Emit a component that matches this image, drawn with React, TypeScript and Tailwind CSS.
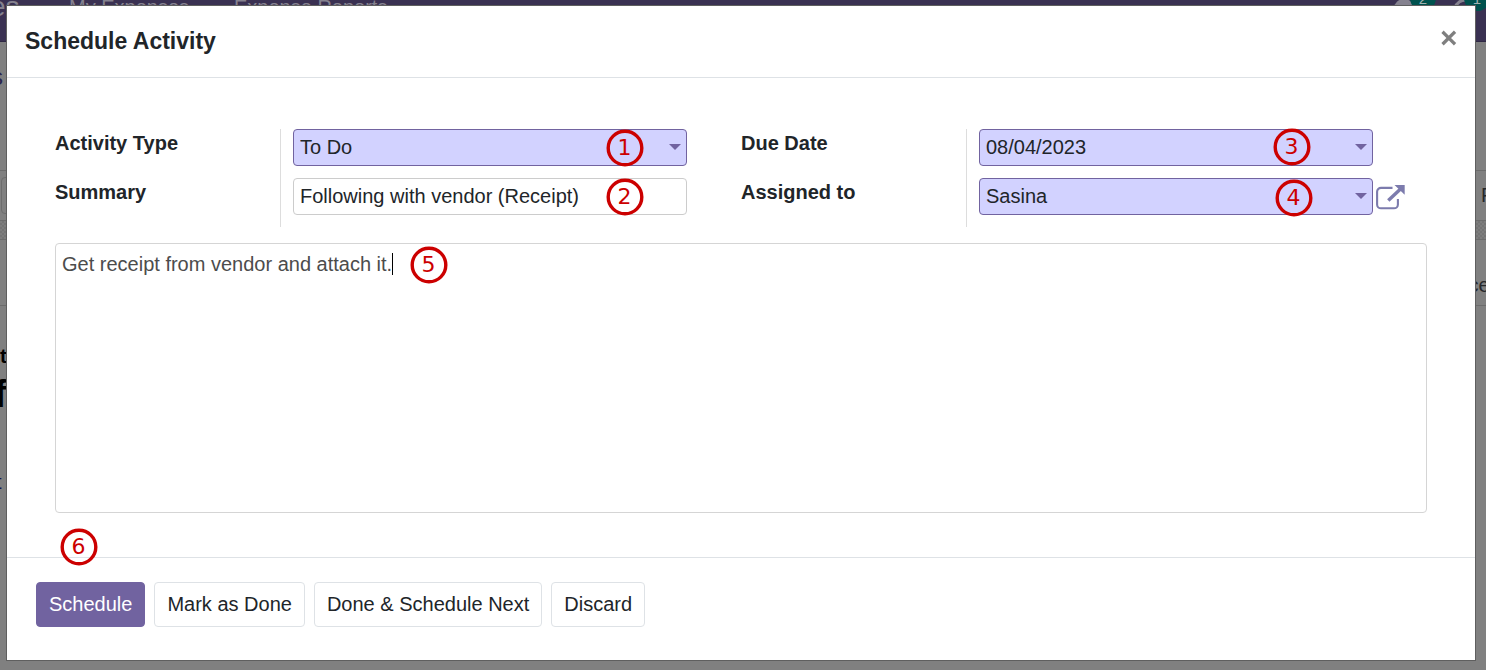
import { useState, type ReactNode } from "react";

function Marker({ n, className }: { n: number; className: string }) {
  return (
    <svg viewBox="0 0 38 38" className={`pointer-events-none absolute size-[38px] ${className}`} aria-hidden="true">
      <circle cx="19" cy="19" r="16.8" fill="none" stroke="#cc0000" strokeWidth="3.4" />
      <text x="18.6" y="26.4" textAnchor="middle" fontSize="22" fill="#cc0000" fontFamily="DejaVu Sans, sans-serif">
        {n}
      </text>
    </svg>
  );
}

function Caret() {
  return (
    <svg viewBox="0 0 12 6" className="pointer-events-none absolute top-[15px] right-[6px] h-[6px] w-[12px]" aria-hidden="true">
      <path d="M0 0H12L6 6Z" fill="#7163a0" />
    </svg>
  );
}

function Field({ id, label, children }: { id: string; label: string; children: ReactNode }) {
  return (
    <div className="flex">
      <label htmlFor={id} className="h-[49px] w-[225px] shrink-0 font-bold">
        {label}
      </label>
      <div className="h-[49px] min-w-0 flex-1 border-l border-[#dddddd] pl-3">{children}</div>
    </div>
  );
}

const box = "block h-[37px] w-full appearance-none rounded-[4px] border px-[6px] outline-none";
const required = "border-[#7163a0] bg-[#d2d2ff]";

function Backdrop() {
  return (
    <div className="absolute inset-0 flex flex-col overflow-hidden bg-[#808080] text-[#26282b]" aria-hidden="true">
      <div className="flex h-[42px] shrink-0 items-start border-b border-[#2f2844] bg-[#3a3152] text-[#85828f]">
        <span className="w-[69px] text-[28px] leading-[14px]">
          <span className="-ml-[10px]">es</span>
        </span>
        <span className="w-[165px] leading-[14px]">My Expenses</span>
        <span className="leading-[14px]">Expense Reports</span>
        <svg viewBox="0 0 100 14" className="ml-auto h-[14px] w-[100px]">
          <path d="M8 8a10 9 0 0 1 20 0Z" fill="#85828f" />
          <circle cx="37" cy="-2" r="13" fill="#00524e" />
          <path d="M69 8a11 11 0 0 1 12-8" fill="none" stroke="#85828f" strokeWidth="3" />
          <circle cx="91" cy="-2" r="13" fill="#00524e" />
          <text x="37" y="4.4" textAnchor="middle" fontSize="15" fill="#a0b0b0">2</text>
          <text x="91" y="4.4" textAnchor="middle" fontSize="15" fill="#a0b0b0">1</text>
        </svg>
      </div>
      <div className="h-[129px] shrink-0 border-b border-[#6c6c6c] pt-[20px] text-[24px] text-[#2a264e]">
        <span className="-ml-[9px]">s</span>
      </div>
      <div className="flex h-[49px] shrink-0 items-center justify-between">
        <span className="ml-px h-[37px] w-[100px] rounded-[4px] border border-[#6c6c6c]" />
        <span className="w-[5px]">Paid</span>
      </div>
      <div className="h-[20px] shrink-0 border-y border-[#6c6c6c] bg-[repeating-conic-gradient(#747474_0_25%,#7d7d7d_0_50%)] bg-[length:4px_4px]" />
      <div className="flex h-[66px] shrink-0 items-center justify-end border-b border-[#6c6c6c] pt-[26px]">
        <span className="w-[22px]">ice</span>
      </div>
      <div className="flex flex-1 flex-col pt-[36px] text-black">
        <span className="h-[30px] font-bold">ti</span>
        <span className="h-[96px] text-[38px] leading-[44px] font-bold">
          <span className="-ml-[6px]">f</span>
        </span>
        <span className="h-[50px] text-[#10134e]">
          <span className="-ml-[4px]">t</span>
        </span>
      </div>
    </div>
  );
}

export default function App() {
  const [type, setType] = useState("To Do");
  const [user, setUser] = useState("Sasina");
  const button = "h-[45px] rounded-[4px] border px-3 whitespace-nowrap";

  return (
    <div className="relative flex min-h-screen flex-col overflow-hidden font-['Liberation_Sans',Arial,sans-serif] text-[20px] leading-[29px] text-[#212529]">
      <Backdrop />
      <div
        role="dialog"
        aria-modal="true"
        aria-labelledby="dialog-title"
        className="relative mt-[5px] mr-[10px] mb-[9px] ml-[6px] flex flex-1 flex-col border border-[#5f5f5f] bg-white"
      >
        <header className="flex h-[72px] shrink-0 items-start justify-between border-b border-[#dee2e6] pt-[17px] pr-[17px] pl-[18px]">
          <h1 id="dialog-title" className="text-[23px] leading-[36px] font-bold">
            Schedule Activity
          </h1>
          <button type="button" aria-label="Close" className="mt-[6px] p-px">
            <svg viewBox="0 0 16 16" className="size-[16px]" aria-hidden="true">
              <path d="M2.7 2.9 12.9 13.1M12.9 2.9 2.7 13.1" stroke="#7f7f7f" strokeWidth="3.3" strokeLinecap="square" />
            </svg>
          </button>
        </header>

        <main className="flex flex-1 flex-col px-[48px] pt-[51px] pb-[44px]">
          <div className="grid grid-cols-2">
            <div className="pr-[54px]">
              <Field id="type" label="Activity Type">
                <div className="relative">
                  <select id="type" value={type} onChange={(e) => setType(e.target.value)} className={`${box} ${required}`}>
                    <option>To Do</option>
                    <option>Email</option>
                    <option>Call</option>
                  </select>
                  <Caret />
                  <Marker n={1} className="top-0 right-[43px]" />
                </div>
              </Field>
              <Field id="summary" label="Summary">
                <div className="relative">
                  <input id="summary" defaultValue="Following with vendor (Receipt)" className={`${box} border-[#cccccc] bg-white`} />
                  <Marker n={2} className="top-0 right-[43px]" />
                </div>
              </Field>
            </div>
            <div className="pr-[54px]">
              <Field id="due" label="Due Date">
                <div className="relative">
                  <input id="due" defaultValue="08/04/2023" className={`${box} ${required}`} />
                  <Caret />
                  <Marker n={3} className="-top-px right-[62px]" />
                </div>
              </Field>
              <Field id="user" label="Assigned to">
                <div className="relative">
                  <select id="user" value={user} onChange={(e) => setUser(e.target.value)} className={`${box} ${required}`}>
                    <option>Sasina</option>
                  </select>
                  <Caret />
                  <Marker n={4} className="top-px right-[60px]" />
                  <button type="button" aria-label="Open record" className="absolute top-[7px] left-full ml-[3px]">
                    <svg viewBox="0 0 29 25" className="h-[25px] w-[29px]" fill="none" stroke="#7c7bad" aria-hidden="true">
                      <path d="M16.5 2.9H5a3.9 3.9 0 0 0-3.9 3.9v12.6A3.9 3.9 0 0 0 5 23.3h13a3.9 3.9 0 0 0 3.9-3.9V14" strokeWidth="2.1" />
                      <path d="M12.3 15.4 24.5 4" strokeWidth="3.4" />
                      <path d="M18.5 0H28.7V9.8Z" fill="#7c7bad" stroke="none" />
                    </svg>
                  </button>
                </div>
              </Field>
            </div>
          </div>

          <div className="relative mt-[16px] flex flex-1">
            <textarea
              aria-label="Note"
              defaultValue="Get receipt from vendor and attach it."
              className="block min-h-[120px] w-full flex-1 resize-none rounded-[4px] border border-[#d5d5d5] px-[6px] py-[6px] text-[#4c4c4c] outline-none"
            />
            <span className="pointer-events-none absolute top-[10px] left-[337px] h-[22px] w-px bg-black" />
            <Marker n={5} className="top-[3px] left-[355px]" />
            <Marker n={6} className="top-full left-[5px] mt-[15px]" />
          </div>
        </main>

        <footer className="flex h-[103px] shrink-0 items-start gap-[9px] border-t border-[#dee2e6] px-[29px] pt-[24px]">
          <button type="button" className={`${button} border-[#7163a0] bg-[#7163a0] text-white`}>
            Schedule
          </button>
          <button type="button" className={`${button} border-[#dee2e6] bg-white`}>
            Mark as Done
          </button>
          <button type="button" className={`${button} border-[#dee2e6] bg-white`}>
            Done &amp; Schedule Next
          </button>
          <button type="button" className={`${button} border-[#dee2e6] bg-white`}>
            Discard
          </button>
        </footer>
      </div>
    </div>
  );
}
